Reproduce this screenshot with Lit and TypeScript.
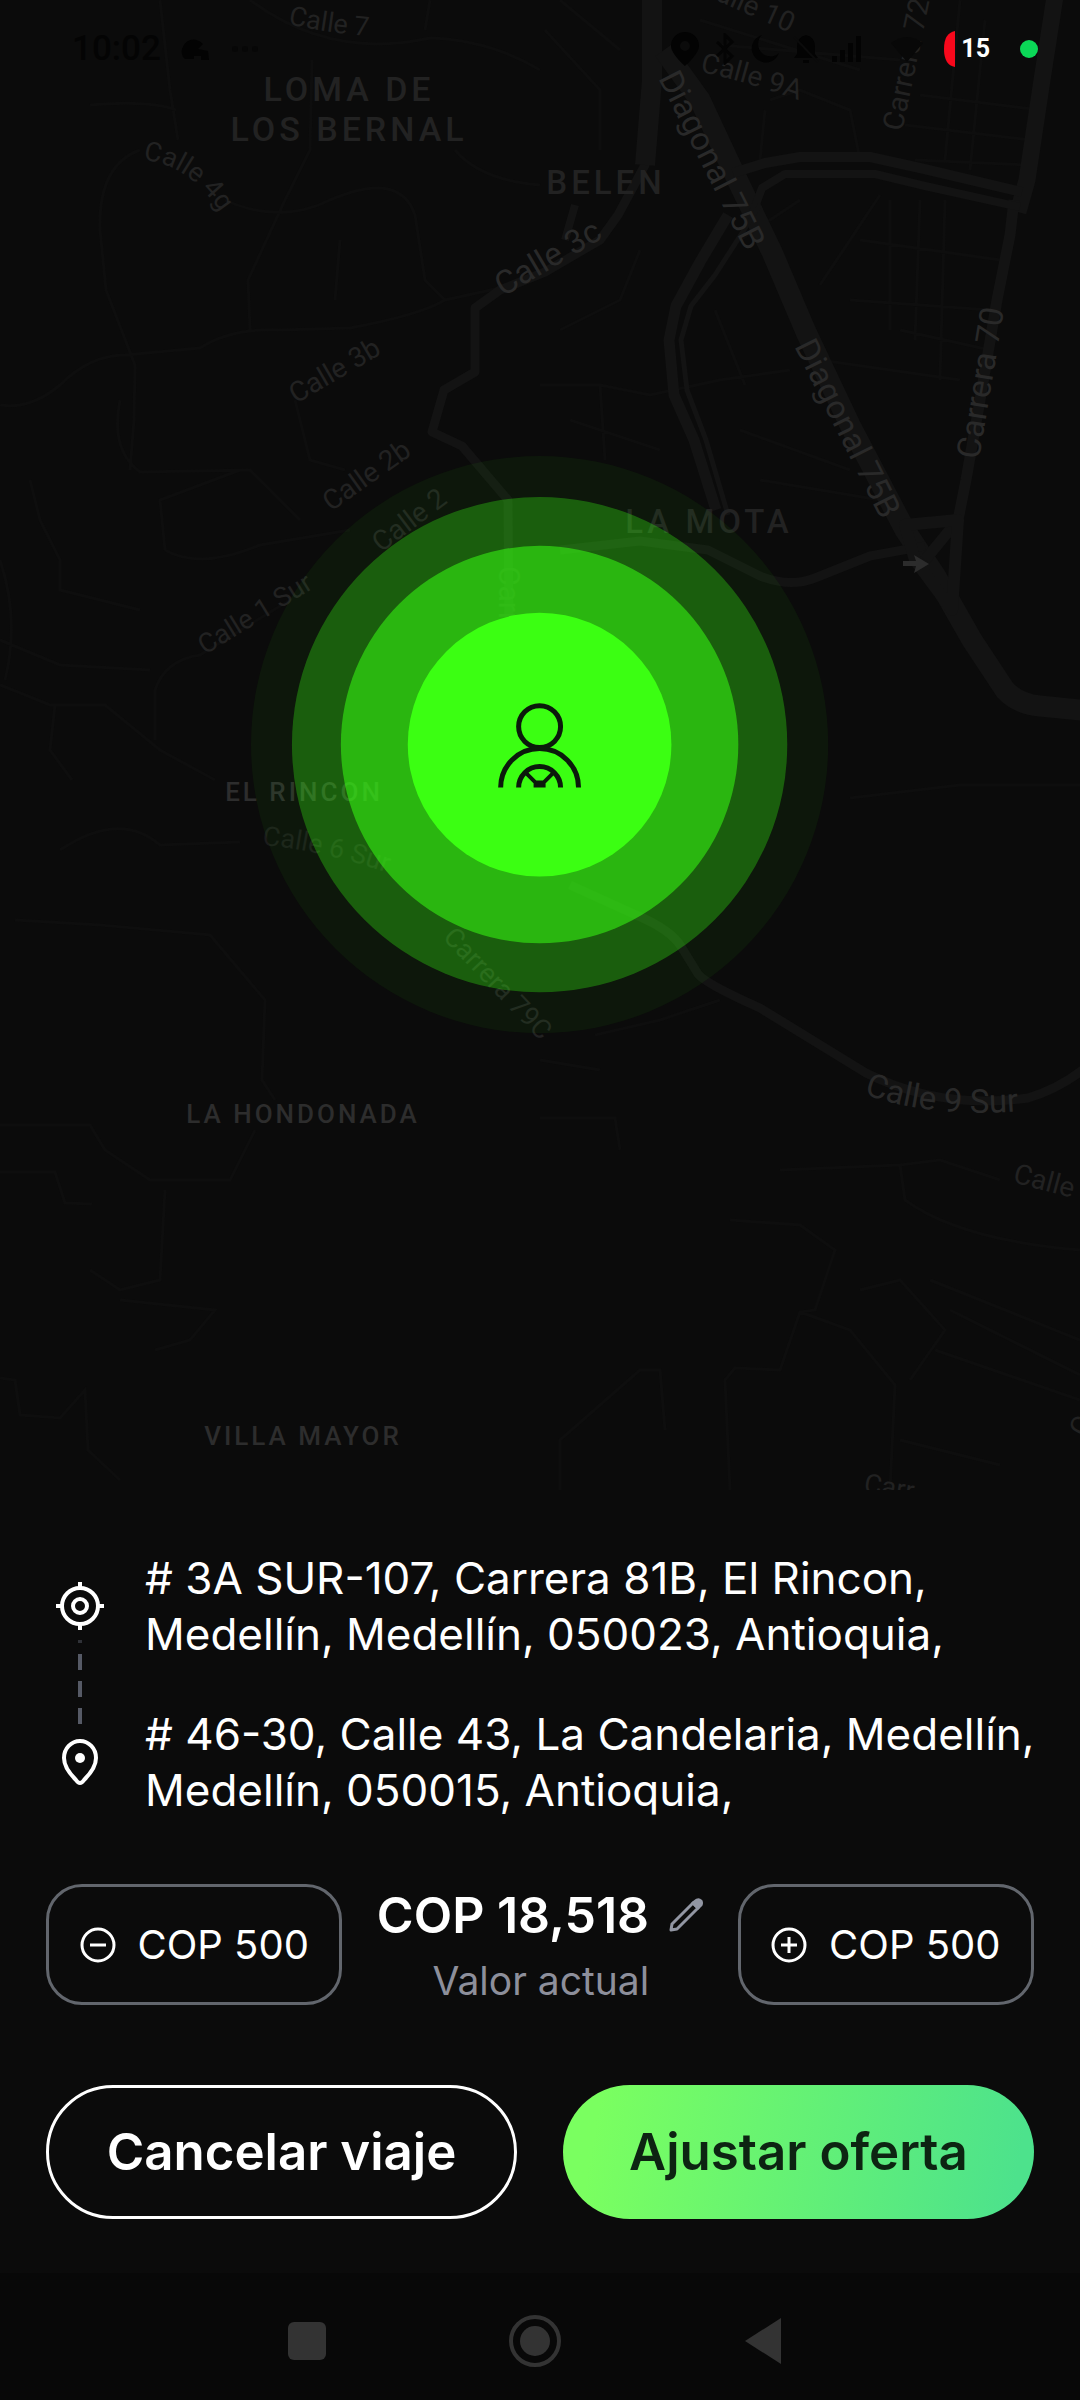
import { LitElement, html, css, svg } from "lit";
import { customElement, property, state } from "lit/decorators.js";

type Road = { d: string; w: number };
type Street = { id: string; d: string; text: string; size: number; tone?: string };
type District = { x: number; y: number; text: string; size: number; tone?: string };

const MAJOR_ROADS: Road[] = [
  { d: "M652 -10 L654 50 L645 165 L618 215 L600 240 L545 272 L500 290 L475 308 L475 372 L444 390 L432 432 L462 446 L508 500 L509 640", w: 9 },
  { d: "M652 -10 L652 80 L645 165", w: 20 },
  { d: "M664 50 L700 100 L735 175 L772 252 L806 332 L850 425 L905 530 L935 575 L972 640 L1005 690 Q1018 704 1040 706 L1090 711", w: 21 },
  { d: "M1056 -10 L1042 80 L1027 180 L1018 212", w: 17 },
  { d: "M1014 200 L1010 235 L997 300 L980 400 L966 480 L958 520 L925 560", w: 11 },
  { d: "M733 173 L765 163 L800 157 L870 157 L920 168 L1022 192", w: 10 },
  { d: "M752 215 L762 188 L785 174 L875 174 L925 186 L1020 207", w: 8 },
  { d: "M728 215 L700 262 L676 306 L669 340 L674 395 L694 440 L716 510", w: 11 },
  { d: "M760 205 L715 275 L691 306 L681 340 L687 390 L706 440 L728 515", w: 5 },
  { d: "M560 550 L640 541 L708 550 L760 576 Q790 588 815 578 L870 556 L925 546", w: 9 },
  { d: "M905 525 L958 520 L952 610 L915 560 Z", w: 12 },
  { d: "M570 885 L636 915 Q672 930 682 948 L698 974 Q706 984 760 1008 L866 1073 Q940 1110 1028 1098 Q1062 1088 1090 1064", w: 9 },
  { d: "M575 205 L565 240", w: 8 },
];

const MINOR_ROADS =
  "M160 0 L170 90 L178 140 M250 0 Q330 60 430 38 Q490 40 540 70 M430 0 L425 30 " +
  "M90 105 Q150 100 176 110 M140 150 Q98 165 100 230 L106 290 L135 365 L134 420 L130 470 " +
  "M0 405 Q30 410 60 385 Q90 355 125 355 L200 348 Q230 328 280 330 L350 328 Q420 315 445 300 L500 288 " +
  "M250 330 L248 280 L285 200 L310 150 L312 60 M225 200 Q280 225 330 200 Q400 170 415 215 L425 280 L445 300 " +
  "M455 150 Q480 180 540 185 M340 240 L335 300 M120 400 Q110 450 140 472 L250 470 L300 520 " +
  "M165 550 L160 500 L240 470 M165 550 Q200 570 260 545 L350 530 M0 685 L50 705 L105 705 L160 750 L215 780 " +
  "M155 740 L155 690 Q165 660 200 655 L290 600 M0 640 L60 665 L150 670 M30 480 L40 520 L60 560 L60 590 L140 610 " +
  "M55 705 L50 750 L72 780 M0 560 Q20 620 5 680 M60 850 Q120 810 160 845 L240 842 M295 400 L310 460 L345 470 " +
  "M15 920 L100 925 L210 935 L265 1000 L262 1080 L275 1100 M0 1125 L90 1125 L105 1150 L150 1180 L230 1180 L255 1130 " +
  "M0 1172 L55 1172 L65 1203 L92 1204 M165 1190 L160 1280 L120 1290 L90 1270 M120 1300 L215 1310 L190 1340 L155 1350 " +
  "M0 1378 L15 1380 L20 1415 L60 1418 L85 1390 L88 1450 L120 1480 M595 1035 L660 1020 L720 1000 M540 1060 L600 1070 " +
  "M540 1118 L615 1118 L620 1150 M780 1170 L900 1165 L940 1160 L1000 1180 M900 1165 L905 1200 Q960 1240 1080 1250 " +
  "M730 1220 L800 1225 L835 1250 L815 1310 L800 1312 L780 1370 L735 1368 L725 1380 L730 1490 M800 1312 L850 1330 L895 1385 L890 1490 " +
  "M860 1290 L900 1280 L945 1330 L910 1380 M930 1280 L1080 1340 M935 1350 L1080 1400 M950 1310 L1080 1375 M900 1440 L1000 1465 " +
  "M560 1490 L560 1440 L640 1370 L660 1370 L665 1430 M850 798 L960 785 L1080 785 " +
  "M540 385 L600 385 L650 395 L720 380 L790 370 M715 310 L745 385 M765 110 L760 160 M770 100 L800 90 L850 110 L860 160 " +
  "M880 195 L820 285 M890 200 L890 330 M920 200 L915 340 M945 200 L940 380 M900 330 L990 350 M820 360 L960 380 " +
  "M860 240 L1000 260 M850 300 L990 310 M740 240 L800 200 M920 95 L1040 110 M905 125 L1030 140 M915 160 L1030 165 " +
  "M960 0 L945 160 M985 20 L970 170 M700 20 L860 70 M720 45 L900 60 M545 30 L600 90 L600 150 M560 0 L620 50 " +
  "M560 330 L620 300 L640 250 M570 420 L660 450 M600 385 L605 460 M740 430 L850 470 M760 480 L880 500";

const STREETS: Street[] = [
  { id: "s1", d: "M288 24 Q325 33 380 37", text: "Calle 7", size: 27 },
  { id: "s2", d: "M143 160 Q195 165 228 225", text: "Calle 4g", size: 27 },
  { id: "s3", d: "M503 297 L620 228", text: "Calle 3c", size: 33, tone: "bright" },
  { id: "s4", d: "M296 404 L400 343", text: "Calle 3b", size: 28 },
  { id: "s5", d: "M331 512 L430 442", text: "Calle 2b", size: 28 },
  { id: "s6", d: "M381 553 L470 486", text: "Calle 2", size: 28 },
  { id: "s7", d: "M205 655 L330 578", text: "Calle 1 Sur", size: 27 },
  { id: "s8", d: "M262 845 Q320 850 385 872", text: "Calle 6 Sur", size: 27, tone: "dim" },
  { id: "s9", d: "M442 938 L580 1083", text: "Carrera 79C", size: 27 },
  { id: "s10", d: "M499 566 L499 680", text: "Carrera", size: 30, tone: "dim" },
  { id: "s11", d: "M698 -8 L810 42", text: "Calle 10", size: 28 },
  { id: "s12", d: "M700 72 Q750 82 820 108", text: "Calle 9A", size: 28 },
  { id: "s13", d: "M658 78 L765 290", text: "Diagonal 75B", size: 33, tone: "bright" },
  { id: "s14", d: "M794 346 L903 564", text: "Diagonal 75B", size: 33, tone: "bright" },
  { id: "s15", d: "M902 132 L934 -20", text: "Carrera 72", size: 29 },
  { id: "s16", d: "M979 460 L1008 285", text: "Carrera 70", size: 33, tone: "bright" },
  { id: "s17", d: "M864 1094 Q935 1120 1034 1110", text: "Calle 9 Sur", size: 33, tone: "bright" },
  { id: "s18", d: "M1012 1182 L1110 1208", text: "Calle", size: 28 },
  { id: "s19", d: "M1086 1438 L1116 1370", text: "Ca", size: 28 },
  { id: "s20", d: "M863 1492 L960 1508", text: "Carr", size: 27 },
];

const DISTRICTS: District[] = [
  { x: 349, y: 101, text: "LOMA DE", size: 34 },
  { x: 349, y: 141, text: "LOS BERNAL", size: 34 },
  { x: 606, y: 194, text: "BELEN", size: 33 },
  { x: 709, y: 533, text: "LA MOTA", size: 33 },
  { x: 304, y: 801, text: "EL RINCON", size: 26, tone: "bright" },
  { x: 303, y: 1123, text: "LA HONDONADA", size: 26, tone: "bright" },
  { x: 303, y: 1445, text: "VILLA MAYOR", size: 26, tone: "bright" },
];

@customElement("city-map")
class CityMap extends LitElement {
  static styles = css`
    :host { display: block; }
    .map { display: block; width: 100%; height: auto; font-family: Roboto, "Liberation Sans", sans-serif; }
    .minor { fill: none; stroke: #0e0e0e; stroke-width: 3; }
    .road { fill: none; stroke: #131313; stroke-linejoin: round; }
    .street { fill: #222; }
    .street.bright { fill: #292929; }
    .street.dim { fill: #1c1c1c; }
    .district { fill: #222; font-weight: 500; letter-spacing: 4px; text-anchor: middle; }
    .district.bright { fill: #2d2d2d; letter-spacing: 3px; }
    .arrow { fill: #2c2c2c; }
  `;
  render() {
    return html`<svg class="map" viewBox="0 0 1080 1490" role="img" aria-label="Mapa de Medellín">
      <path class="minor" d=${MINOR_ROADS} />
      ${MAJOR_ROADS.map((r) => svg`<path class="road" d=${r.d} stroke-width=${r.w} />`)}
      <path class="arrow" d="M903 561 h13 l-2 -6 l15 9 l-15 9 l2 -7 h-13 z" />
      ${STREETS.map((s) => svg`<path id=${s.id} d=${s.d} fill="none" />
        <text class="street ${s.tone ?? ""}" font-size=${s.size}><textPath href="#${s.id}">${s.text}</textPath></text>`)}
      ${DISTRICTS.map((d) => svg`<text class="district ${d.tone ?? ""}" x=${d.x} y=${d.y} font-size=${d.size}>${d.text}</text>`)}
    </svg>`;
  }
}

@customElement("search-pulse")
class SearchPulse extends LitElement {
  static styles = css`
    :host { display: block; }
    .pulse { display: block; width: 100%; height: auto; }
    .glyph { fill: none; stroke: #0b1a0b; stroke-width: 5; }
  `;
  render() {
    return html`<svg class="pulse" viewBox="0 0 584 584" role="img" aria-label="Buscando conductor">
      <circle cx="292" cy="292" r="289" fill="#39ff14" fill-opacity=".05" />
      <circle cx="292" cy="292" r="248" fill="#39ff14" fill-opacity=".31" />
      <circle cx="292" cy="292" r="199" fill="#39ff14" fill-opacity=".55" />
      <circle cx="292" cy="292" r="132" fill="#3bff12" />
      <g class="glyph">
        <circle cx="292" cy="274" r="21" />
        <path d="M253 335 A39 39 0 0 1 331 335" />
        <path d="M271 335 A21 21 0 0 1 313 335" />
        <path d="M277 319 L288 330 H296 L307 319 M286 333 H298" stroke-width="4" />
      </g>
    </svg>`;
  }
}

@customElement("status-bar")
class StatusBar extends LitElement {
  static styles = css`
    :host { display: block; }
    .bar { display: flex; align-items: center; justify-content: space-between; padding: 28px 42px 0 72px;
      height: 42px; font-family: Roboto, "Liberation Sans", sans-serif; color: #040404; }
    .group { display: flex; align-items: center; gap: 20px; }
    .time { font-size: 35px; font-weight: 500; line-height: 42px; }
    .quiet { display: flex; align-items: center; gap: 12px; fill: #030303; }
    .battery { display: flex; align-items: center; gap: 5px; margin-right: 10px; }
    .level { color: #fff; font-size: 25px; font-weight: 700; line-height: 34px; }
    .dot { width: 18px; height: 18px; border-radius: 50%; background: #0bd857; }
  `;
  render() {
    return html`<div class="bar">
      <div class="group">
        <span class="time">10:02</span>
        <svg width="30" height="26" viewBox="0 0 30 26" fill="#030303" aria-hidden="true"><path d="M2 21 A12 12 0 0 1 22 8 L17 13 L27 15 L28 24 H20 V20 H13 V23 H4 Z" /></svg>
        <svg width="28" height="8" viewBox="0 0 28 8" fill="#070707" aria-hidden="true"><circle cx="4" cy="4" r="3" /><circle cx="14" cy="4" r="3" /><circle cx="24" cy="4" r="3" /></svg>
      </div>
      <div class="group">
        <div class="quiet">
          <svg width="30" height="36" viewBox="0 0 30 36" aria-hidden="true"><path fill-rule="evenodd" d="M15 1 A14 14 0 0 1 29 15 C29 23 15 35 15 35 C15 35 1 23 1 15 A14 14 0 0 1 15 1 Z M15 10 A5 5 0 1 0 15 20 A5 5 0 1 0 15 10 Z" /></svg>
          <svg width="26" height="32" viewBox="0 0 26 32" fill="none" stroke="#040404" stroke-width="3" aria-hidden="true"><path fill="none" d="M5 9 L20 23 L13 30 V2 L20 9 L5 23" /></svg>
          <svg width="30" height="30" viewBox="0 0 30 30" aria-hidden="true"><path d="M12 1 A14 14 0 1 0 29 19 A12 12 0 0 1 12 1 Z" /></svg>
          <svg width="28" height="32" viewBox="0 0 28 32" aria-hidden="true"><path d="M14 2 Q23 4 23 14 V21 L26 25 H2 L5 21 V14 Q5 4 14 2 Z M11 27 H17 V30 H11 Z" /><path d="M2 4 L26 29" stroke="#0b0b0b" stroke-width="2" /></svg>
          <svg width="30" height="26" viewBox="0 0 30 26" aria-hidden="true"><path d="M0 20 H5 V26 H0 Z M8 14 H13 V26 H8 Z M16 7 H21 V26 H16 Z M24 0 H29 V26 H24 Z" /></svg>
          <svg width="50" height="26" viewBox="0 0 50 26" fill="#080808" aria-hidden="true"><path d="M33 26 L17 7 Q33 -5 49 7 Z" /></svg>
        </div>
        <div class="battery">
          <svg width="12" height="36" viewBox="0 0 12 36" aria-hidden="true"><path fill="#f8081c" d="M11 0 V36 Q0 34 0 18 Q0 2 11 0 Z" /></svg>
          <span class="level">15</span>
        </div>
        <span class="dot"></span>
      </div>
    </div>`;
  }
}

@customElement("trip-route")
class TripRoute extends LitElement {
  static styles = css`
    :host { display: block; }
    .route { display: grid; grid-template-columns: 68px 1fr; column-gap: 31px; row-gap: 44px; }
    .mark { display: grid; place-items: center; position: relative; }
    .link { position: absolute; left: 32px; top: 88px; }
    .address { margin: 0; font-size: 44px; line-height: 56px; color: #fff; white-space: nowrap; }
  `;
  render() {
    return html`<div class="route">
      <div class="mark">
        <svg width="50" height="50" viewBox="0 0 50 50" fill="none" stroke="#fff" stroke-width="4" aria-hidden="true">
          <circle cx="25" cy="25" r="18" /><circle cx="25" cy="25" r="7" /><path d="M25 1 V7 M25 43 V49 M1 25 H7 M43 25 H49" />
        </svg>
        <svg class="link" width="5" height="86" viewBox="0 0 5 86" stroke="#565a66" stroke-width="4" aria-hidden="true">
          <path d="M2 2 V5" opacity=".5" /><path d="M2 16 V32 M2 43 V59 M2 70 V86" />
        </svg>
      </div>
      <p class="address"># 3A SUR-107, Carrera 81B, El Rincon,<br />Medellín, Medellín, 050023, Antioquia,</p>
      <div class="mark">
        <svg width="40" height="48" viewBox="0 0 40 48" fill="none" stroke="#fff" stroke-width="4" aria-hidden="true">
          <path d="M20 45 Q18 45 16 42 C8 34 4 27 4 20 A16 17 0 0 1 36 20 C36 27 32 34 24 42 Q22 45 20 45 Z" stroke-linejoin="round" />
          <circle cx="20" cy="20" r="5" fill="#fff" stroke="none" />
        </svg>
      </div>
      <p class="address"># 46-30, Calle 43, La Candelaria, Medellín,<br />Medellín, 050015, Antioquia,</p>
    </div>`;
  }
}

@customElement("step-button")
class StepButton extends LitElement {
  @property() sign = "minus";
  static styles = css`
    :host { display: block; }
    .step { display: flex; align-items: center; justify-content: center; gap: 22px; width: 100%; height: 121px; padding: 0;
      border: 3px solid #62666d; border-radius: 36px; background: none; color: #fff; font: inherit; font-size: 40px; line-height: 48px; cursor: pointer; }
  `;
  render() {
    const plus = this.sign === "plus";
    return html`<button class="step" type="button" aria-label=${plus ? "Aumentar COP 500" : "Reducir COP 500"}>
      <svg width="36" height="36" viewBox="0 0 36 36" fill="none" stroke="#fff" stroke-width="3" aria-hidden="true">
        <circle cx="18" cy="18" r="16" /><path d=${plus ? "M10 18 H26 M18 10 V26" : "M10 18 H26"} />
      </svg>
      <span>COP 500</span>
    </button>`;
  }
}

@customElement("app-root")
class AppRoot extends LitElement {
  @state() private price = "COP 18,518";
  static styles = css`
    :host { display: block; }
    .screen { display: flex; flex-direction: column; min-height: 100vh; background: #0b0b0b; color: #fff;
      font-family: Inter, "Liberation Sans", sans-serif; }
    .stage { display: grid; position: relative; overflow: hidden; }
    .stage > city-map, .stage > search-pulse { grid-area: 1 / 1; }
    .stage > search-pulse { place-self: center; width: 54%; }
    .status { position: absolute; inset: 0 0 auto; }
    .panel { display: flex; flex-direction: column; padding: 60px 46px 54px; }
    .offer { display: grid; grid-template-columns: 3fr 4fr 3fr; align-items: center; margin-top: 66px; }
    .current { display: grid; grid-template-columns: auto auto; justify-content: center; align-items: center; column-gap: 20px; row-gap: 12px; }
    .price { font-size: 50px; font-weight: 600; line-height: 60px; }
    .caption { justify-self: end; color: #8d8f9b; font-size: 39px; line-height: 48px; }
    .edit { display: block; padding: 0; border: 0; background: none; cursor: pointer; }
    .edit svg { display: block; }
    .actions { display: grid; grid-template-columns: 1fr 1fr; gap: 46px; margin-top: 80px; }
    .action { height: 134px; padding: 0; border-radius: 67px; font: inherit; font-size: 51px; font-weight: 600; line-height: 64px; cursor: pointer; }
    .cancel { border: 3px solid #fff; background: none; color: #fff; }
    .adjust { border: 0; background: linear-gradient(100deg, #7aff60 8%, #4de28c 95%); color: #0d2412; }
    .nav { display: flex; flex: 1; align-items: center; justify-content: center; gap: 168px; padding: 8px 10px 0 0; min-height: 118px; background: #080808; }
    .key { display: grid; place-items: center; width: 60px; height: 60px; padding: 0; border: 0; background: none; cursor: pointer; }
  `;
  render() {
    return html`<main class="screen">
      <section class="stage">
        <city-map></city-map>
        <search-pulse></search-pulse>
        <status-bar class="status"></status-bar>
      </section>
      <section class="panel">
        <trip-route></trip-route>
        <div class="offer">
          <step-button sign="minus"></step-button>
          <div class="current">
            <span class="price">${this.price}</span>
            <button class="edit" type="button" aria-label="Editar valor">
              <svg width="34" height="34" viewBox="0 0 34 34" fill="none" stroke="#9296a3" stroke-width="3" stroke-linejoin="round" aria-hidden="true">
                <path d="M2 32 L3 26 L24 5 L29 10 L8 31 Z" /><path d="M24 5 L28 2 Q30 1 32 3 Q33 5 32 7 L29 10 Z" fill="#9296a3" />
              </svg>
            </button>
            <span class="caption">Valor actual</span>
          </div>
          <step-button sign="plus"></step-button>
        </div>
        <div class="actions">
          <button class="action cancel" type="button">Cancelar viaje</button>
          <button class="action adjust" type="button">Ajustar oferta</button>
        </div>
      </section>
      <nav class="nav" aria-label="Sistema">
        <button class="key" type="button" aria-label="Recientes"><svg width="38" height="38" viewBox="0 0 38 38" aria-hidden="true"><rect width="38" height="38" rx="6" fill="#333" /></svg></button>
        <button class="key" type="button" aria-label="Inicio"><svg width="52" height="52" viewBox="0 0 52 52" aria-hidden="true"><circle cx="26" cy="26" r="24" fill="none" stroke="#333" stroke-width="4" /><circle cx="26" cy="26" r="15" fill="#333" /></svg></button>
        <button class="key" type="button" aria-label="Atrás"><svg width="36" height="46" viewBox="0 0 36 46" aria-hidden="true"><path d="M36 0 V46 L0 23 Z" fill="#333" /></svg></button>
      </nav>
    </main>`;
  }
}
